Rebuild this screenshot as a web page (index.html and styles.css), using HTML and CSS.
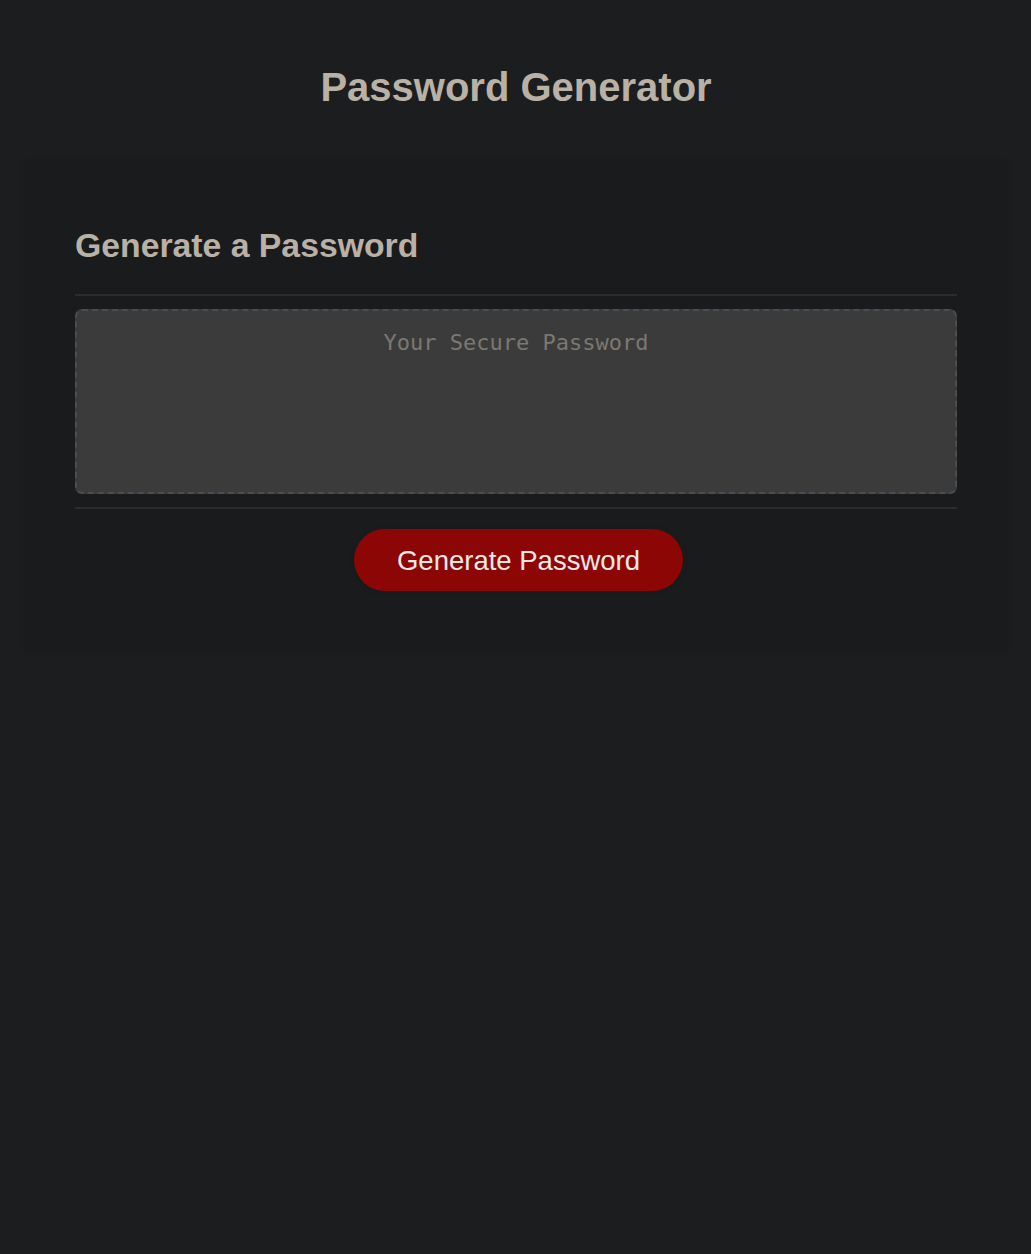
FILE: index.html
```html
<!DOCTYPE html>
<html lang="en">
<head>
<meta charset="UTF-8">
<title>Password Generator</title>
<link rel="stylesheet" href="styles.css">
</head>
<body>
<div class="wrapper">
  <header class="page-header">
    <h1 class="page-title">Password Generator</h1>
  </header>
  <div class="card">
    <div class="card-header">
      <h2 class="card-title">Generate a Password</h2>
    </div>
    <div class="card-body">
      <textarea readonly class="password" placeholder="Your Secure Password" aria-label="Generated Password"></textarea>
    </div>
    <div class="card-footer">
      <div class="btn-row">
        <button class="btn">Generate Password</button>
      </div>
    </div>
  </div>
</div>
</body>
</html>
```

FILE: styles.css
```css
html, body {
  margin: 0;
  padding: 0;
}
body {
  background: #1c1d1f;
  font-family: "Liberation Sans", Arial, sans-serif;
  min-height: 1254px;
}
.wrapper {
  padding: 64px 24px 0 25px;
}
.page-header {
  text-align: center;
}
.page-title {
  margin: 0;
  font-size: 40px;
  line-height: 46px;
  font-weight: bold;
  color: #b9b1a6;
}
.card {
  margin-top: 50px;
  background: #1a1b1d;
  border-radius: 6px;
  box-shadow: rgba(0, 0, 0, 0.08) 0 2px 6px 0;
  padding: 37px 50px 39px 50px;
  color: #b9b1a6;
}
.card-title {
  margin: 29px 0 29px 0;
  font-size: 33.75px;
  line-height: 39px;
  font-weight: bold;
  color: #b9b1a6;
}
.card-header::after,
.card-footer::before {
  content: "";
  display: block;
  height: 2px;
  background: #2a2c2e;
}
.card-body {
  padding: 13px 0;
}
.password {
  display: block;
  box-sizing: border-box;
  width: 100%;
  height: 185px;
  margin: 0;
  padding: 19px 19px 0 19px;
  background: #3b3b3b;
  border: 2.5px dashed #4a4e52;
  border-radius: 7px;
  resize: none;
  overflow: hidden;
  font-family: "DejaVu Sans Mono", "Liberation Mono", monospace;
  font-size: 22px;
  text-align: center;
  color: #d0ccc5;
  outline: none;
}
.password::placeholder {
  color: #7c7871;
}
.btn-row {
  display: flex;
  justify-content: center;
  padding: 20px 0 20px 5px;
}
.btn {
  margin: 0;
  border: none;
  background: #8c0606;
  color: #ece9e4;
  border-radius: 31px;
  font-family: "Liberation Sans", Arial, sans-serif;
  font-size: 27.5px;
  line-height: 27px;
  padding: 17.5px 42.5px;
  cursor: pointer;
  box-shadow: rgba(0, 0, 0, 0.1) 0 1px 6px 0;
}
```
